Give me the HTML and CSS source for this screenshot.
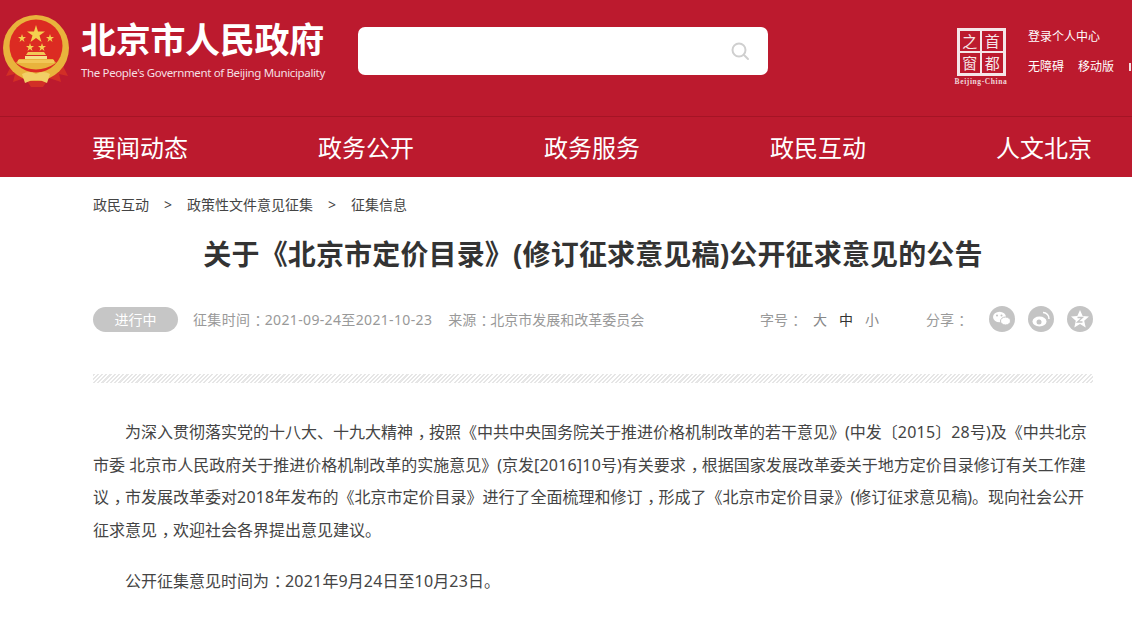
FILE: index.html
```html
<!DOCTYPE html>
<html lang="zh-CN">
<head>
<meta charset="utf-8">
<title>关于《北京市定价目录》(修订征求意见稿)公开征求意见的公告</title>
<link rel="stylesheet" href="styles.css">
</head>
<body>
<header class="top">
  <div class="brand-row">
    <div class="brand">
      <svg class="emblem" viewBox="0 0 70 76" aria-hidden="true">
        <path d="M12 48 L5 62 L14 60 L12 68 L24 64 L30 73 H42 L48 64 L60 68 L58 60 L67 62 L60 48 Z" fill="#d22f26"/>
        <circle cx="35" cy="34" r="33" fill="#e9b33c"/>
        <circle cx="35" cy="32" r="26.500" fill="#dc2b22"/>
        <path d="M15 49 Q35 62 55 49 L52 45 H18 Z" fill="#e9b33c"/>
        <path d="M21 60 Q28 56 35 60 Q42 56 49 60 L46 69 Q35 63 24 69 Z" fill="#f2cf66"/>
        <path d="M27 38 H43 L45 41 H25 Z" fill="#f2c757"/>
        <rect x="24" y="42" width="22" height="3" fill="#f6dc87"/>
        <rect x="17" y="46" width="36" height="3" fill="#f2c757"/>
        <polygon points="35,11 37,17.500 44,17.500 38.500,21.500 40.500,28 35,24 29.500,28 31.500,21.500 26,17.500 33,17.500" fill="#f4d04f"/>
        <polygon points="21,20 22,23 25,23 22.500,25 23.500,28 21,26 18.500,28 19.500,25 17,23 20,23" fill="#f4d04f"/>
        <polygon points="49,20 50,23 53,23 50.500,25 51.500,28 49,26 46.500,28 47.500,25 45,23 48,23" fill="#f4d04f"/>
        <polygon points="29,29 30,32 33,32 30.500,34 31.500,37 29,35 26.500,37 27.500,34 25,32 28,32" fill="#f4d04f"/>
        <polygon points="41,29 42,32 45,32 42.500,34 43.500,37 41,35 38.500,37 39.500,34 37,32 40,32" fill="#f4d04f"/>
      </svg>
      <div class="brand-text">
        <div class="brand-cn">北京市人民政府</div>
        <div class="brand-en">The People's Government of Beijing Municipality</div>
      </div>
    </div>
    <div class="search">
      <svg class="search-icon" viewBox="0 0 20 20" aria-hidden="true"><circle cx="9" cy="9" r="6.500" fill="none" stroke="#cfcfcf" stroke-width="2"/><path d="M14 14 L18 18" stroke="#cfcfcf" stroke-width="2" stroke-linecap="round"/></svg>
    </div>
    <div class="seal">
      <div class="seal-box">
        <span>之</span><span>首</span><span>窗</span><span>都</span>
      </div>
      <div class="seal-en">Beijing-China</div>
    </div>
    <div class="user-links">
      <div>登录个人中心</div>
      <div class="user-row"><span>无障碍</span><span>移动版</span><span class="clip-mark"></span></div>
    </div>
  </div>
  <nav class="nav">
    <a>要闻动态</a><a>政务公开</a><a>政务服务</a><a>政民互动</a><a>人文北京</a>
  </nav>
</header>
<main class="wrap">
  <div class="crumbs"><span>政民互动</span><i>&gt;</i><span>政策性文件意见征集</span><i>&gt;</i><span>征集信息</span></div>
  <h1 class="title">关于《北京市定价目录》(修订征求意见稿)公开征求意见的公告</h1>
  <div class="meta">
    <span class="status">进行中</span>
    <span class="meta-time">征集时间<span class="pn">：</span>2021-09-24至2021-10-23</span>
    <span class="meta-src">来源<span class="pn">：</span>北京市发展和改革委员会</span>
    <span class="spacer"></span>
    <span class="size">字号<span class="pn">：</span></span>
    <span class="size-opts"><span>大</span><b>中</b><span>小</span></span>
    <span class="share">分享<span class="pn">：</span></span>
    <span class="icons">
      <span class="ico"><svg viewBox="0 0 26 26"><ellipse cx="10.500" cy="11" rx="6.500" ry="5.200" fill="#fff"/><ellipse cx="16.500" cy="15" rx="5" ry="4" fill="#fff" stroke="#c4c4c4"/><circle cx="8" cy="9.500" r="1" fill="#c4c4c4"/><circle cx="12.500" cy="9.500" r="1" fill="#c4c4c4"/></svg></span>
      <span class="ico"><svg viewBox="0 0 26 26"><ellipse cx="11.500" cy="15.500" rx="7" ry="5" fill="#fff"/><circle cx="11" cy="16" r="2.500" fill="#c4c4c4"/><path d="M15 6.500 A6 6 0 0 1 21 13" fill="none" stroke="#fff" stroke-width="1.500"/></svg></span>
      <span class="ico"><svg viewBox="0 0 26 26"><polygon points="13,4 15.700,10 22,10.500 17.200,14.800 18.700,21.500 13,18 7.300,21.500 8.800,14.800 4,10.500 10.300,10" fill="#fff"/><path d="M10.500 11.500 H15.500 L10.500 16 H15.500" fill="none" stroke="#c4c4c4" stroke-width="1.300"/></svg></span>
    </span>
  </div>
  <div class="stripe"></div>
  <article class="body">
    <p>为深入贯彻落实党的十八大、十九大精神<span class="pn">，</span>按照《中共中央国务院关于推进价格机制改革的若干意见》(中发〔<span class="num">2015</span>〕<span class="num">28</span>号)及《中共北京<br>市委 北京市人民政府关于推进价格机制改革的实施意见》(京发<span class="num">[2016]10</span>号)有关要求<span class="pn">，</span>根据国家发展改革委关于地方定价目录修订有关工作建<br>议<span class="pn">，</span>市发展改革委对<span class="num">2018</span>年发布的《北京市定价目录》进行了全面梳理和修订<span class="pn">，</span>形成了《北京市定价目录》(修订征求意见稿)。现向社会公开<br>征求意见<span class="pn">，</span>欢迎社会各界提出意见建议。</p>
    <p>公开征集意见时间为<span class="pn">：</span><span class="num">2021</span>年<span class="num">9</span>月<span class="num">24</span>日至<span class="num">10</span>月<span class="num">23</span>日。</p>
  </article>
</main>
</body>
</html>
```
FILE: styles.css
```css
* { box-sizing: border-box; }
html, body { margin: 0; padding: 0; }
body { background: #fff; font-family: "Noto Sans", "Noto Sans CJK SC", sans-serif; color: #444; height: 617px; overflow: hidden; }
.top { background: #bc1a2e; height: 177px; }
.brand-row { height: 117px; display: flex; align-items: flex-start; border-bottom: 1px solid #a51425; }
.brand { display: flex; width: 358px; padding: 14px 0 0 1px; }
.emblem { width: 70px; height: 76px; flex: none; }
.brand-text { margin-left: 10px; color: #fff; }
.brand-cn { font-size: 35px; line-height: 40px; font-weight: 700; margin-top: 6px; white-space: nowrap; letter-spacing: -0.300px; }
.brand-en { font-size: 11.500px; line-height: 16px; margin-top: 5px; color: #f5dfe2; white-space: nowrap; letter-spacing: -0.360px; }
.search { width: 410px; height: 48px; margin-top: 27px; background: #fff; border-radius: 7px; display: flex; align-items: center; justify-content: flex-end; padding-right: 18px; }
.search-icon { width: 20px; height: 20px; }
.seal { margin: 28px 0 0 186px; width: 54px; display: flex; flex-direction: column; align-items: center; }
.seal-box { width: 49px; height: 48px; border: 3px solid #f5e6e8; display: grid; grid-template-columns: 1fr 1fr; grid-template-rows: 1fr 1fr; gap: 2px; color: #f5e6e8; font-size: 15px; line-height: 20px; text-align: center; font-family: "Noto Sans CJK SC", sans-serif; background: #f5e6e8; }
.seal-box span { background: #bc1a2e; }
.seal-en { font-size: 7.500px; font-family: "Liberation Serif", serif; font-weight: 700; color: #f0d5d9; line-height: 10px; margin-top: 1px; white-space: nowrap; letter-spacing: 0.600px; }
.user-links { margin: 28px 0 0 20px; color: #fff; font-size: 12px; line-height: 17px; white-space: nowrap; }
.user-row { display: flex; gap: 14px; margin-top: 13px; align-items: center; }
.clip-mark { width: 2px; height: 8px; background: #f5dfe2; margin-left: 1px; }
.nav { height: 60px; display: flex; justify-content: space-between; align-items: center; padding: 2px 40px 0 92px; }
.nav a { color: #fff; font-size: 24px; line-height: 32px; }
.wrap { width: 1000px; margin-left: 93px; }
.crumbs { font-size: 14px; line-height: 18px; padding-top: 19px; height: 56px; color: #444; display: flex; }
.crumbs i { font-style: normal; margin: 0 15px; }
.title { margin: 0; text-align: center; font-size: 28px; line-height: 42px; height: 42px; color: #333; font-weight: 700; white-space: nowrap; letter-spacing: 0.150px; }
.meta { margin-top: 31px; height: 26px; display: flex; align-items: center; font-size: 14px; color: #999; white-space: nowrap; }
.status { width: 85px; height: 25px; background: #c6c6c6; border-radius: 12.500px; color: #fff; text-align: center; line-height: 25px; }
.meta-time { margin-left: 15px; letter-spacing: 0.350px; }
.meta-src { margin-left: 16px; }
.spacer { flex: 1; }
.size { width: 53px; }
.size-opts { display: flex; gap: 12px; width: 62px; margin-right: 51px; color: #888; }
.size-opts b { font-weight: 400; color: #333; }
.share { width: 63px; }
.icons { display: flex; gap: 13px; }
.ico { width: 26px; height: 26px; border-radius: 50%; background: #c4c4c4; display: block; }
.ico svg { width: 26px; height: 26px; display: block; }
.stripe { margin-top: 42px; height: 9px; background: repeating-linear-gradient(135deg, #e6e6e6 0 1.500px, #fff 1.500px 3px); }
.body { padding-top: 33px; font-size: 16px; line-height: 32.500px; color: #444; white-space: nowrap; }
.body p { margin: 0 0 18.500px; text-indent: 32px; }
.pn { font-feature-settings: "halt"; padding-left: 0.300em; padding-right: 0.200em; }
.num { letter-spacing: 0.200px; }
```
